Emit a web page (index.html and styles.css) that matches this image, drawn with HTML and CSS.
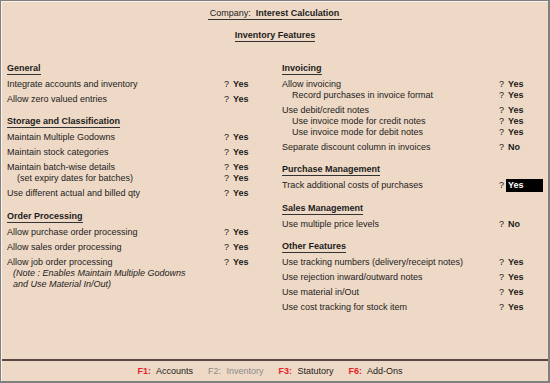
FILE: index.html
```html
<!DOCTYPE html>
<html lang="en">
  <head>
    <meta charset="UTF-8" />
    <meta name="viewport" content="width=device-width, initial-scale=1.0" />
    <title>Inventory Features</title>
    <link rel="stylesheet" href="styles.css">
  </head>
  <body>
    <div class="frame">
      <div class="header">
        <div class="company">Company: &nbsp;<b>Interest Calculation</b></div>
        <div class="title">Inventory Features</div>
      </div>

      <div class="main">
        <!-- left column -->
        <div class="col">
          <div class="heading">General</div>
          <div class="row"><span class="label">Integrate accounts and inventory</span><span class="q">?</span><span class="val">Yes</span></div>
          <div class="row"><span class="label">Allow zero valued entries</span><span class="q">?</span><span class="val">Yes</span></div>

          <div class="heading">Storage and Classification</div>
          <div class="row"><span class="label">Maintain Multiple Godowns</span><span class="q">?</span><span class="val">Yes</span></div>
          <div class="row"><span class="label">Maintain stock categories</span><span class="q">?</span><span class="val">Yes</span></div>
          <div class="row"><span class="label">Maintain batch-wise details</span><span class="q">?</span><span class="val">Yes</span></div>
          <div class="row sub"><span class="label indent">(set expiry dates for batches)</span><span class="q">?</span><span class="val">Yes</span></div>
          <div class="row"><span class="label">Use different actual and billed qty</span><span class="q">?</span><span class="val">Yes</span></div>

          <div class="heading">Order Processing</div>
          <div class="row"><span class="label">Allow purchase order processing</span><span class="q">?</span><span class="val">Yes</span></div>
          <div class="row"><span class="label">Allow sales order processing</span><span class="q">?</span><span class="val">Yes</span></div>
          <div class="row"><span class="label">Allow job order processing</span><span class="q">?</span><span class="val">Yes</span></div>
          <div class="note">(Note : Enables Maintain Multiple Godowns<br>and Use Material In/Out)</div>
        </div>

        <!-- right column -->
        <div class="col">
          <div class="heading">Invoicing</div>
          <div class="row"><span class="label">Allow invoicing</span><span class="q">?</span><span class="val">Yes</span></div>
          <div class="row sub"><span class="label indent">Record purchases in invoice format</span><span class="q">?</span><span class="val">Yes</span></div>
          <div class="row"><span class="label">Use debit/credit notes</span><span class="q">?</span><span class="val">Yes</span></div>
          <div class="row sub"><span class="label indent">Use invoice mode for credit notes</span><span class="q">?</span><span class="val">Yes</span></div>
          <div class="row sub"><span class="label indent">Use invoice mode for debit notes</span><span class="q">?</span><span class="val">Yes</span></div>
          <div class="row"><span class="label">Separate discount column in invoices</span><span class="q">?</span><span class="val">No</span></div>

          <div class="heading">Purchase Management</div>
          <div class="row"><span class="label">Track additional costs of purchases</span><span class="q">?</span><span class="val active">Yes</span></div>

          <div class="heading">Sales Management</div>
          <div class="row"><span class="label">Use multiple price levels</span><span class="q">?</span><span class="val">No</span></div>

          <div class="heading">Other Features</div>
          <div class="row"><span class="label">Use tracking numbers (delivery/receipt notes)</span><span class="q">?</span><span class="val">Yes</span></div>
          <div class="row"><span class="label">Use rejection inward/outward notes</span><span class="q">?</span><span class="val">Yes</span></div>
          <div class="row"><span class="label">Use material in/Out</span><span class="q">?</span><span class="val">Yes</span></div>
          <div class="row"><span class="label">Use cost tracking for stock item</span><span class="q">?</span><span class="val">Yes</span></div>
        </div>
      </div>

      <div class="footer">
        <span class="key"><b>F1:</b> Accounts</span>
        <span class="key off"><b>F2:</b> Inventory</span>
        <span class="key"><b>F3:</b> Statutory</span>
        <span class="key"><b>F6:</b> Add-Ons</span>
      </div>
    </div>
  </body>
</html>
```

FILE: styles.css
```css
html,
body {
  margin: 0;
  padding: 0;
  width: 100%;
  height: 100%;
  overflow: hidden;
}

body {
  background: #808080;
  font-family: "Liberation Sans", Arial, sans-serif;
  font-size: 9px;
  color: #1c1c1c;
}

.frame {
  margin: 1px 2px 2px 1px;
  height: 379px;
  border-top: 1px solid #faf3ec;
  border-left: 1px solid #faf3ec;
  background: #eed8c6;
  display: flex;
  flex-direction: column;
}

b {
  font-weight: bold;
}

/* Header */
.header {
  display: flex;
  flex-direction: column;
  align-items: center;
  padding-top: 6px;
  line-height: 11px;
}

.company {
  border-bottom: 1px solid #333;
  padding: 0 3px 0 2px;
}

.title {
  margin-top: 10px;
  font-weight: bold;
  border-bottom: 1px solid #333;
}

/* Columns */
.main {
  flex: 1;
  display: grid;
  grid-template-columns: 275px 1fr;
  padding: 9px 5px 0;
}

.col {
  line-height: 11px;
}

.heading {
  display: table;
  margin-top: 11.5px;
  font-weight: bold;
  border-bottom: 1px solid #333;
  line-height: 10px;
  padding-bottom: 1px;
}

.row {
  display: flex;
  margin-top: 4px;
  white-space: nowrap;
}

.row.sub {
  margin-top: 0;
}

.label {
  flex: 0 0 217px;
}

.indent {
  padding-left: 10px;
  box-sizing: border-box;
}

.q {
  flex: 0 0 7px;
}

.val {
  font-weight: bold;
  width: 33px;
  padding: 0 2px;
}

.val.active {
  background: #000;
  color: #fff;
  line-height: 13px;
  margin: -1px 0;
}

.note {
  font-style: italic;
  padding-left: 6px;
}

/* Footer */
.footer {
  border-top: 2px solid #5a4848;
  height: 20px;
  display: flex;
  align-items: center;
  justify-content: center;
  gap: 15px;
  padding-right: 10px;
}

.key b {
  color: #e8232b;
  margin-right: 3px;
}

.key.off,
.key.off b {
  color: #8c8c8c;
  font-weight: normal;
}
```
